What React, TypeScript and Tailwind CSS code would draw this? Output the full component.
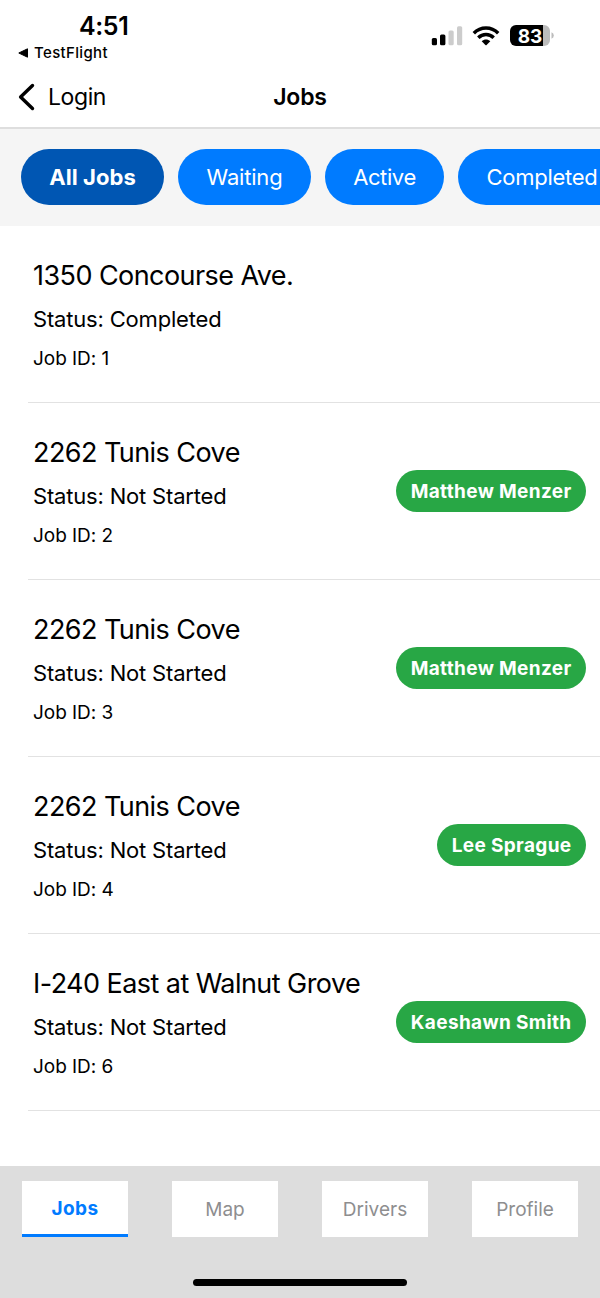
import { useState } from "react";

const FILTERS = [
  { label: "All Jobs", width: "w-[143px]", tracking: "tracking-[0.05px]" },
  { label: "Waiting", width: "w-[133px]", tracking: "tracking-[-0.2px]" },
  { label: "Active", width: "w-[119px]", tracking: "tracking-[-0.4px]" },
  { label: "Completed", width: "w-[168px]", tracking: "tracking-[-0.25px]" },
];

const JOBS = [
  { id: 1, address: "1350 Concourse Ave.", status: "Completed", driver: null },
  { id: 2, address: "2262 Tunis Cove", status: "Not Started", driver: "Matthew Menzer" },
  { id: 3, address: "2262 Tunis Cove", status: "Not Started", driver: "Matthew Menzer" },
  { id: 4, address: "2262 Tunis Cove", status: "Not Started", driver: "Lee Sprague" },
  { id: 6, address: "I-240 East at Walnut Grove", status: "Not Started", driver: "Kaeshawn Smith" },
];

const TABS = ["Jobs", "Map", "Drivers", "Profile"];

function SignalIcon() {
  return (
    <svg width="32" height="20" viewBox="0 0 32 20" aria-hidden="true">
      <rect x="0.8" y="12" width="5.2" height="7.3" rx="1.5" fill="#000" />
      <rect x="9" y="8.5" width="5.4" height="10.8" rx="1.5" fill="#000" />
      <rect x="17.5" y="4.5" width="5.2" height="14.8" rx="1.5" fill="#ccc" />
      <rect x="26" y="0.3" width="5.2" height="19" rx="1.5" fill="#ccc" />
    </svg>
  );
}

function WifiIcon() {
  return (
    <svg width="28" height="20" viewBox="0 0 28 20" fill="none" aria-hidden="true">
      <path d="M1.8 7.2C8.7 0.4 19.3 0.4 26.2 7.2" stroke="#000" strokeWidth="3.5" />
      <path d="M6.3 11.7C10.7 7.5 17.3 7.5 21.7 11.7" stroke="#000" strokeWidth="3.5" />
      <path d="M9.7 15.3C12.2 13 15.8 13 18.3 15.3L14.6 19Q14 19.5 13.4 19Z" fill="#000" />
    </svg>
  );
}

function Battery() {
  return (
    <div className="flex items-center">
      <div className="flex h-[21px] w-10 items-center justify-center rounded-[6px] bg-[linear-gradient(to_right,#000_83%,#bcbcbc_83%)] pt-px text-[19px] leading-none font-bold text-white">
        83
      </div>
      <svg width="4" height="7" viewBox="0 0 4 7" aria-hidden="true">
        <path d="M1.5 0.3Q3.8 1.3 3.8 3.5T1.5 6.7Z" fill="#bcbcbc" />
      </svg>
    </div>
  );
}

function StatusBar() {
  return (
    <div className="flex h-[66px] justify-between pr-[46px] pl-[18px]">
      <div>
        <div className="mt-[11px] pl-[61px] text-[25px] leading-[30px] font-semibold tracking-[-0.4px]">4:51</div>
        <div className="mt-[2px] flex items-center gap-[5px] text-[15px] leading-[19px] font-medium tracking-[0.35px]">
          <svg width="11" height="10" viewBox="0 0 11 10" aria-hidden="true">
            <path d="M0.8 5L9.5 0.8V9.2Z" fill="#000" stroke="#000" strokeLinejoin="round" />
          </svg>
          TestFlight
        </div>
      </div>
      <div className="mt-[25px] flex h-[21px] items-center">
        <SignalIcon />
        <div className="ml-[9px]">
          <WifiIcon />
        </div>
        <div className="ml-[10px]">
          <Battery />
        </div>
      </div>
    </div>
  );
}

function Header() {
  return (
    <header className="grid h-[63px] grid-cols-3 items-center border-b-2 border-[#dedede] pr-[18px] pl-[18px] text-[23px]">
      <button type="button" className="flex items-center gap-[13px] pt-[2px] tracking-[-0.4px]">
        <svg width="17" height="28" viewBox="0 0 17 28" fill="none" className="-mt-[2px]" aria-hidden="true">
          <path d="M14.5 2.5L2.6 14L14.5 25.5" stroke="#000" strokeWidth="3.4" strokeLinecap="round" strokeLinejoin="round" />
        </svg>
        Login
      </button>
      <h1 className="pt-[2px] text-center font-semibold tracking-[-0.2px]">Jobs</h1>
    </header>
  );
}

function JobRow({ job }: { job: (typeof JOBS)[number] }) {
  return (
    <li className="ml-7 flex h-[177px] items-center justify-between border-b border-[#e2e2e2] pr-[14px] pl-[5px]">
      <div className="pt-[2px]">
        <h2 className="text-[27px] leading-[34px] tracking-[-0.56px]">{job.address}</h2>
        <p className="mt-[12px] text-[22px] leading-[28px] tracking-[-0.18px]">Status: {job.status}</p>
        <p className="mt-[14px] text-[19px] leading-[24px] tracking-[-0.05px]">Job ID: {job.id}</p>
      </div>
      {job.driver && (
        <span className="flex h-[42px] items-center rounded-full bg-[#28a745] pt-[2px] pr-[14.5px] pl-[14.5px] text-[19px] font-bold tracking-[0.35px] text-white">
          {job.driver}
        </span>
      )}
    </li>
  );
}

export default function App() {
  const [filter, setFilter] = useState("All Jobs");
  const [tab, setTab] = useState("Jobs");

  return (
    <div className="flex h-[1298px] w-[600px] flex-col overflow-hidden bg-white font-['Inter','Liberation_Sans',sans-serif] text-black">
      <StatusBar />
      <Header />

      <div className="flex h-[97px] shrink-0 gap-[14px] overflow-hidden bg-[#f5f5f5] pt-5 pl-[21px]">
        {FILTERS.map((item) => (
          <button
            key={item.label}
            type="button"
            onClick={() => setFilter(item.label)}
            className={`h-14 shrink-0 rounded-full text-[22px] text-white ${item.width} ${item.tracking} ${
              filter === item.label ? "bg-[#0056b3] font-bold" : "bg-[#007bff]"
            }`}
          >
            {item.label}
          </button>
        ))}
      </div>

      <ul className="flex-1">
        {JOBS.map((job) => (
          <JobRow key={job.id} job={job} />
        ))}
      </ul>

      <footer className="flex h-[132px] shrink-0 flex-col items-center bg-[#ddd] pt-[15px]">
        <nav className="grid w-full grid-cols-4 justify-items-center">
          {TABS.map((item) => (
            <button
              key={item}
              type="button"
              onClick={() => setTab(item)}
              className={`h-14 w-[106px] bg-white text-[19px] ${
                tab === item
                  ? "border-b-[3px] border-[#007bff] pt-[3px] font-bold tracking-[0.35px] text-[#007bff]"
                  : "pt-[2px] text-[#8e8e8f]"
              }`}
            >
              {item}
            </button>
          ))}
        </nav>
        <div className="mt-[42px] h-[7px] w-[214px] rounded-full bg-black" />
      </footer>
    </div>
  );
}
